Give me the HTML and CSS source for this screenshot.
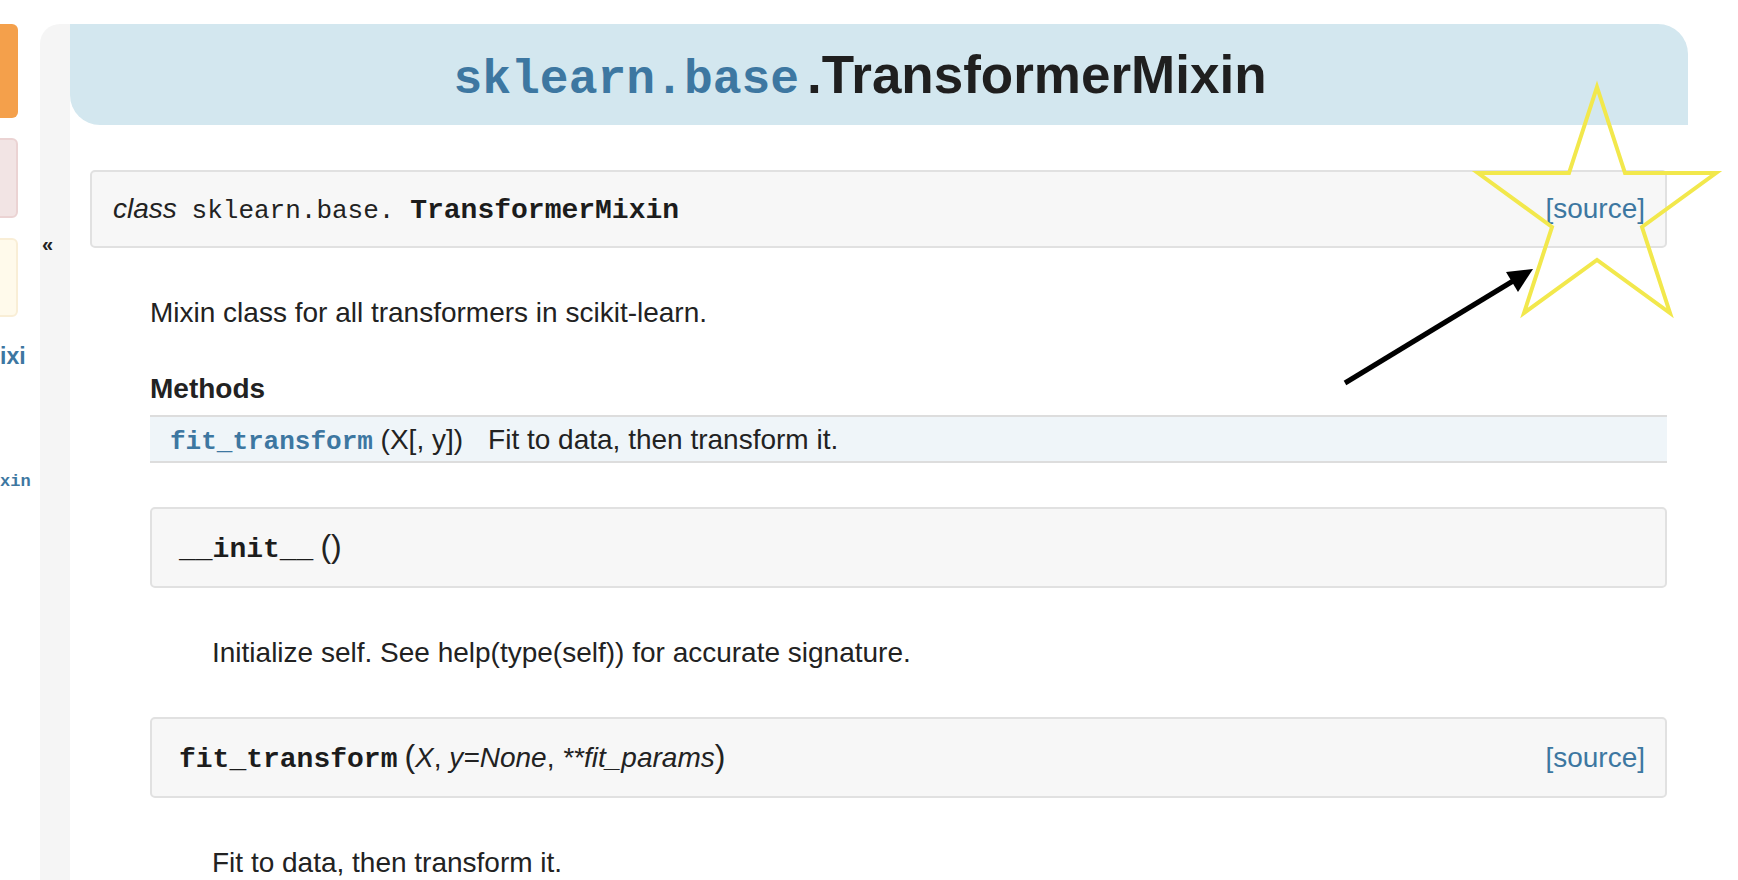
FILE: index.html
```html
<!DOCTYPE html>
<html lang="en">
<head>
<meta charset="utf-8">
<title>sklearn.base.TransformerMixin</title>
<link rel="stylesheet" href="styles.css">
</head>
<body>
<div class="page">
  <aside class="sidebar">
    <div class="sb-box sb-orange"></div>
    <div class="sb-box sb-pink"></div>
    <div class="sb-box sb-yellow"></div>
    <div class="sb-link sb-title">ixi</div>
    <div class="sb-link sb-code">xin</div>
  </aside>
  <div class="toggle"><span class="toggle-btn">«</span></div>
  <main class="main">
    <header class="title-bar">
      <h1><code class="mod">sklearn.base</code>.TransformerMixin</h1>
    </header>
    <div class="content">
      <dl class="cls">
        <dt class="sig sig-class">
          <span class="sig-text"><em class="prop">class</em> <code class="cn">sklearn.base.</code> <code class="name cls-name">TransformerMixin</code></span>
          <a class="src" href="#">[source]</a>
        </dt>
        <dd>
          <p class="para para-intro">Mixin class for all transformers in scikit-learn.</p>
          <p class="rubric">Methods</p>
          <div class="summary">
            <div class="sum-sig"><code>fit_transform</code> (X[, y])</div>
            <div class="sum-desc">Fit to data, then transform it.</div>
          </div>
          <dl class="method method-first">
            <dt class="sig sig-method">
              <span class="sig-text"><code class="name">__init__</code><span class="paren">(</span><span class="paren paren-close">)</span></span>
            </dt>
            <dd><p class="para para-first">Initialize self. See help(type(self)) for accurate signature.</p></dd>
          </dl>
          <dl class="method method-second">
            <dt class="sig sig-method">
              <span class="sig-text"><code class="name">fit_transform</code><span class="paren">(</span><em class="param">X</em>, <em class="param">y=None</em>, <em class="param">**fit_params</em><span class="paren paren-close">)</span></span>
              <a class="src" href="#">[source]</a>
            </dt>
            <dd><p class="para para-second">Fit to data, then transform it.</p></dd>
          </dl>
        </dd>
      </dl>
    </div>
  </main>
</div>
<svg class="annotation" width="1738" height="880" viewBox="0 0 1738 880" aria-hidden="true">
  <polygon class="star" points="1597,87 1625,173 1716,173 1642,227 1670,313 1597,260 1524,313 1552,227 1478,173 1569,173"/>
  <line class="arrow-line" x1="1345" y1="383" x2="1513" y2="281"/>
  <polygon class="arrow-head" points="1533,269 1506,272 1518,292"/>
</svg>
</body>
</html>
```

FILE: styles.css
```css
html, body {
  margin: 0;
  height: 880px;
  overflow: hidden;
  background: #ffffff;
}

body {
  font-family: "Liberation Sans", Arial, sans-serif;
  color: #222222;
  position: relative;
}

.page {
  display: flex;
  height: 880px;
}

/* left sidebar (cut off) */
.sidebar {
  width: 40px;
  flex: none;
  padding-top: 24px;
  overflow: hidden;
  box-sizing: border-box;
}

.sb-box {
  width: 24px;
  margin-left: -6px;
  border-radius: 6px;
  box-sizing: border-box;
}

.sb-orange {
  height: 94px;
  background: #f4a04b;
}

.sb-pink {
  height: 80px;
  margin-top: 20px;
  background: #f2e4e4;
  border: 2px solid #ebd3d3;
}

.sb-yellow {
  height: 79px;
  margin-top: 20px;
  background: #fffaeb;
  border: 2px solid #f9eed6;
}

.sb-link {
  white-space: nowrap;
  color: #3d77a1;
  font-weight: bold;
}

.sb-title {
  margin-top: 19px;
  font-size: 23px;
  line-height: 40px;
}

.sb-code {
  margin-top: 86px;
  font-family: "Liberation Mono", monospace;
  font-size: 17px;
  line-height: 40px;
}

/* collapse strip */
.toggle {
  width: 30px;
  flex: none;
  margin-top: 24px;
  background: #f5f5f5;
  border-top-left-radius: 20px;
}

.toggle-btn {
  display: block;
  padding: 210px 0 0 2px;
  font-size: 20px;
  line-height: 20px;
  font-weight: bold;
  color: #222222;
}

/* main column */
.main {
  flex: 1;
  min-width: 0;
  padding-top: 24px;
  padding-right: 50px;
}

.title-bar {
  background: #d3e7ef;
  border-radius: 0 30px 0 30px;
  height: 101px;
}

.title-bar h1 {
  margin: 0;
  box-sizing: border-box;
  height: 101px;
  padding: 21px 38px 0 0;
  text-align: center;
  font-size: 53px;
  line-height: 60px;
  font-weight: bold;
  color: #1f1f1f;
  white-space: nowrap;
}

.mod {
  font-family: "Liberation Mono", monospace;
  font-size: 48px;
  color: #3d77a1;
  line-height: 1;
  margin-right: 8px;
}

.content {
  padding: 0 21px 0 20px;
}

dl, dd {
  margin: 0;
}

code {
  font-family: "Liberation Mono", monospace;
  line-height: 1;
}

.sig {
  display: flex;
  align-items: center;
  justify-content: space-between;
  box-sizing: border-box;
  background: #f7f7f7;
  border: 2px solid #e1e1e1;
  border-radius: 5px;
  font-size: 28px;
  line-height: 40px;
  white-space: nowrap;
}

.sig-class {
  margin-top: 45px;
  height: 78px;
  padding: 0 20px 0 21px;
}

.sig-method {
  height: 81px;
  padding: 0 20px 0 27px;
}

.prop {
  font-style: italic;
  margin-right: 7px;
}

.cn {
  font-size: 26px;
}

.name {
  font-size: 28px;
  font-weight: bold;
  color: #1c1c1c;
}

.cls-name {
  margin-left: 8px;
}

.src {
  color: #3d77a1;
  text-decoration: none;
}

.paren {
  font-size: 32px;
  line-height: 1;
  margin-left: 7px;
}

.paren-close {
  margin-left: 0;
}

.param {
  font-style: italic;
}

.cls > dd {
  margin-left: 60px;
}

.para {
  margin: 0;
  font-size: 28px;
  line-height: 40px;
}

.para-intro {
  margin-top: 45px;
}

.rubric {
  margin: 36px 0 0;
  font-size: 28px;
  line-height: 40px;
  font-weight: bold;
}

.summary {
  margin-top: 6px;
  display: flex;
  box-sizing: border-box;
  height: 48px;
  padding-top: 2px;
  background: #eff5f9;
  border-top: 2px solid #dddddd;
  border-bottom: 2px solid #dddddd;
  font-size: 28px;
  line-height: 42px;
  white-space: nowrap;
}

.sum-sig {
  padding: 0 12px 0 20px;
}

.sum-sig code {
  font-size: 26px;
  font-weight: bold;
  color: #3d77a1;
}

.sum-desc {
  padding-left: 13px;
}

.method-first {
  margin-top: 44px;
}

.method-second {
  margin-top: 44px;
}

.method > dd {
  margin-left: 62px;
}

.para-first {
  margin-top: 45px;
}

.para-second {
  margin-top: 45px;
}

/* annotation overlay */
.annotation {
  position: absolute;
  left: 0;
  top: 0;
  pointer-events: none;
}

.star {
  fill: none;
  stroke: #f2e84c;
  stroke-width: 4;
  stroke-linejoin: miter;
}

.arrow-line {
  stroke: #000000;
  stroke-width: 5;
}

.arrow-head {
  fill: #000000;
}
```
